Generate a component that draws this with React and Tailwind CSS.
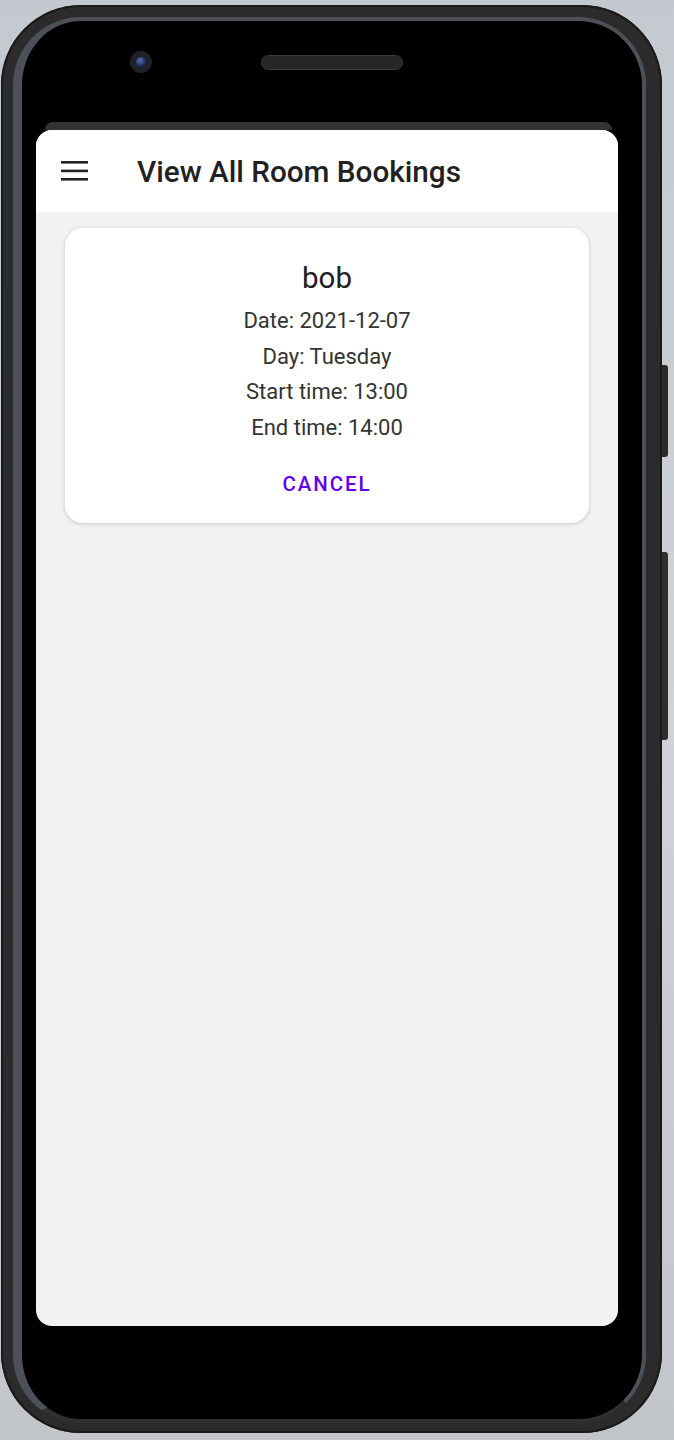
import React from 'react';

const booking = {
  name: 'bob',
  date: '2021-12-07',
  day: 'Tuesday',
  start: '13:00',
  end: '14:00',
};

const MenuIcon = () => (
  <svg width="27" height="20" viewBox="0 0 27 20" className="block">
    <rect x="0" y="0" width="27" height="2.6" fill="#212121" />
    <rect x="0" y="8.6" width="27" height="2.6" fill="#212121" />
    <rect x="0" y="17" width="27" height="2.6" fill="#212121" />
  </svg>
);

const BookingCard = ({ b }) => (
  <div className="mx-[29px] mt-[16px] rounded-[18px] bg-white pt-[33px] pb-[25px] text-center shadow-[0_1px_4px_rgba(0,0,0,0.18)]">
    <div className="text-[29.5px] leading-[35px] text-[#212121]">{b.name}</div>
    <div className="mt-[7px] text-[22px] leading-[35.5px] text-[#333]">
      <div>Date: {b.date}</div>
      <div>Day: {b.day}</div>
      <div>Start time: {b.start}</div>
      <div>End time: {b.end}</div>
    </div>
    <button className="mt-[27px] text-[20.5px] font-medium leading-[24px] tracking-[1.9px] text-[#6200ee]">
      CANCEL
    </button>
  </div>
);

export default function App() {
  return (
    <div
      className="h-[1440px] w-[674px] overflow-hidden bg-gradient-to-b from-[#c3c9cf] via-[#cfd3d7] to-[#c2c6ca] pt-[5px]"
      style={{ fontFamily: 'Roboto, "Noto Sans", sans-serif' }}
    >
      <div className="flex">
        {/* phone body */}
        <div className="ml-px h-[1428px] w-[661px] rounded-[80px] bg-[#2b2b2b] pt-[12px] pb-[10px] pl-[12px] pr-[16px] shadow-[inset_0_0_0_2px_#1a1a1a]">
          <div className="h-full rounded-[68px] border-[4px] border-l-[9px] border-[#4c5157] border-b-[#2e3033] bg-black">
            {/* camera + speaker */}
            <div className="flex h-[82px] items-center">
              <div className="ml-[108px] flex h-[22px] w-[22px] items-center justify-center rounded-full bg-[#1f2226]">
                <div className="h-[10px] w-[10px] rounded-full bg-[radial-gradient(circle_at_40%_35%,#5b6fb0,#1a2556_70%)]" />
              </div>
              <div className="ml-[109px] h-[15px] w-[142px] rounded-full border border-[#3a3a3a] bg-[#262626]" />
            </div>
            {/* status strip */}
            <div className="mt-[19px] ml-[23px] mr-[30px] h-[8px] rounded-t-[8px] bg-[#333]" />
            {/* screen */}
            <div className="ml-[14px] h-[1196px] w-[582px] overflow-hidden rounded-[16px] bg-[#f2f2f2]">
              <div className="flex h-[82px] items-center bg-white">
                <div className="ml-[25px]">
                  <MenuIcon />
                </div>
                <h1 className="ml-[49px] mt-[2px] text-[29.7px] font-medium leading-none text-[#212121]">
                  View All Room Bookings
                </h1>
              </div>
              <BookingCard b={booking} />
            </div>
          </div>
        </div>
        {/* side buttons */}
        <div className="flex w-[6px] flex-col">
          <div className="mt-[360px] h-[92px] rounded-r-[3px] bg-[#2a2a2a]" />
          <div className="mt-[95px] h-[188px] rounded-r-[3px] bg-[#2f2f2f]" />
        </div>
      </div>
    </div>
  );
}
